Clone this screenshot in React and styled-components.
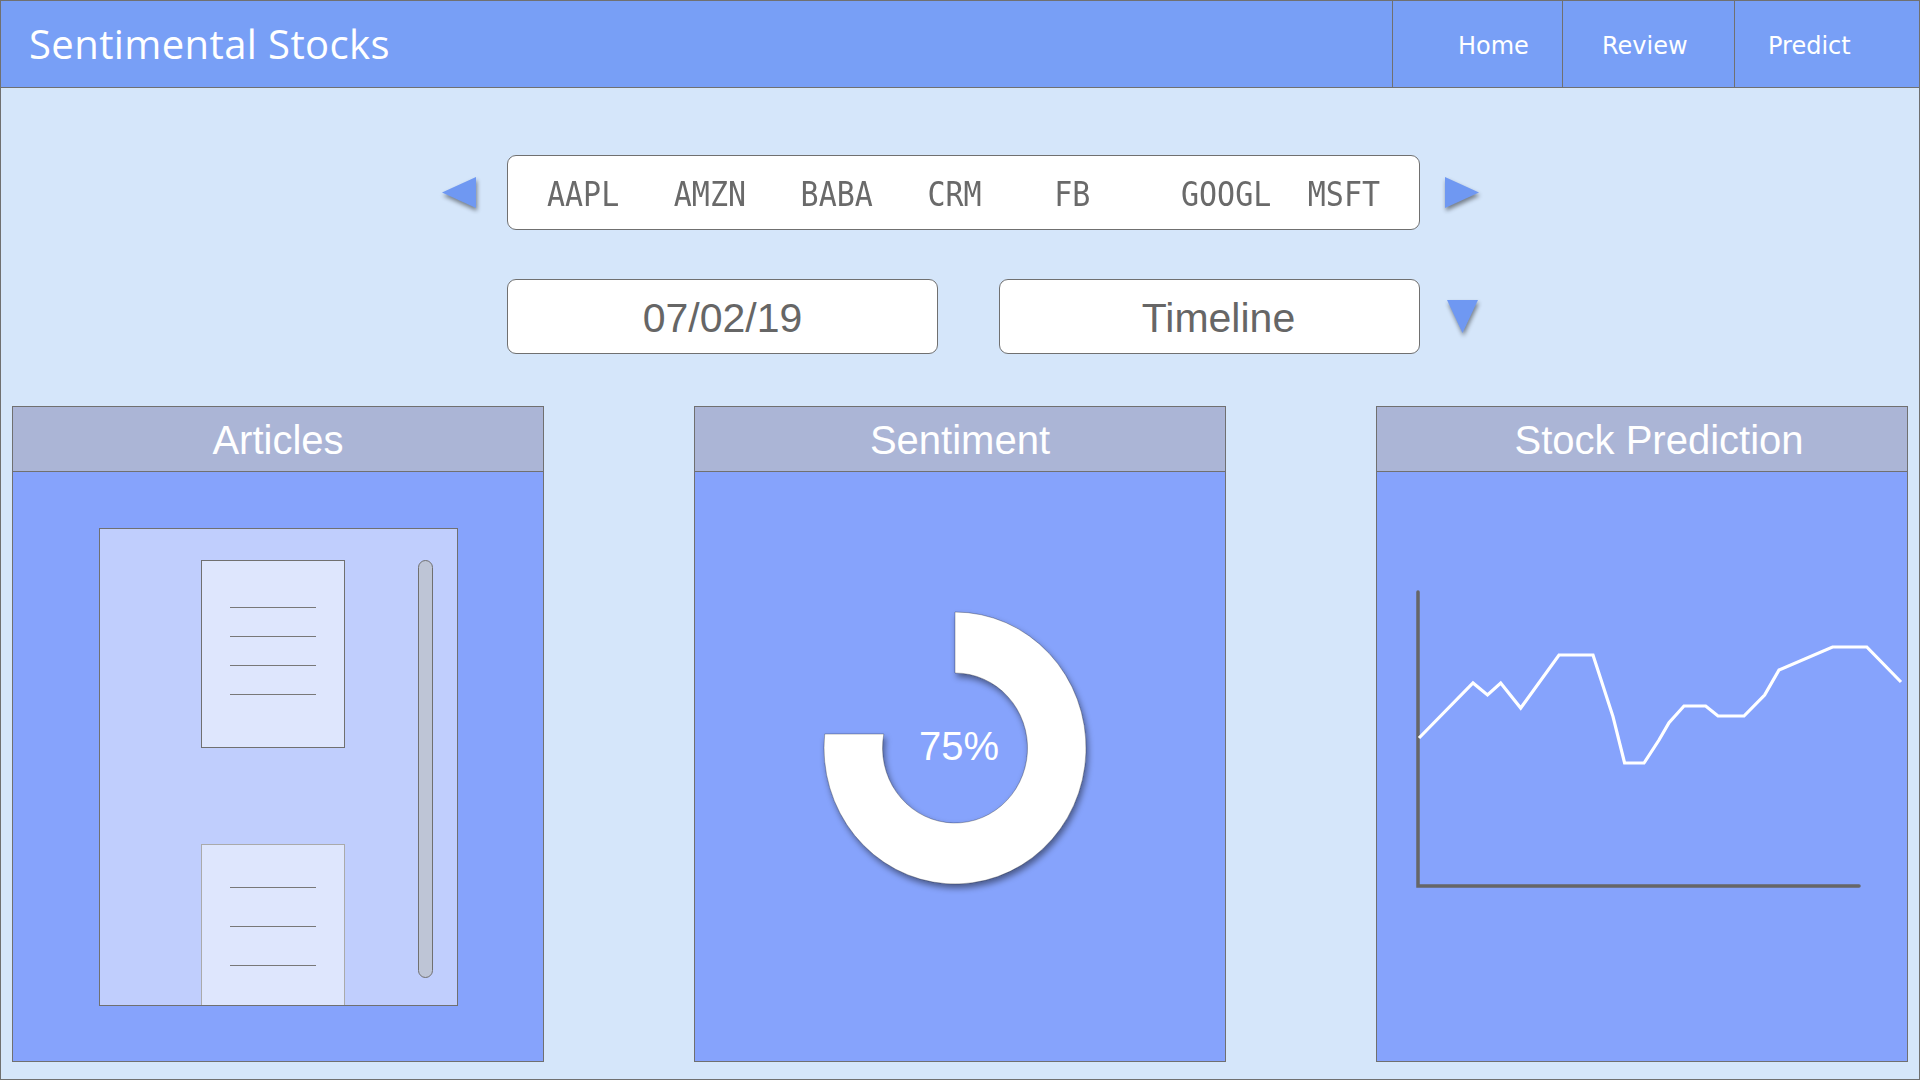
import React from "react"
import styled, { createGlobalStyle } from "styled-components"

const GlobalStyle = createGlobalStyle`
  html, body {
    margin: 0;
    padding: 0;
    background: #d5e6fa;
  }
  * { box-sizing: border-box; }
`

const Page = styled.div`
  width: 1920px;
  height: 1080px;
  border: 1px solid #707070;
  background: #d5e6fa;
  display: flex;
  flex-direction: column;
  overflow: hidden;
`
const Header = styled.header`
  height: 87px;
  flex-shrink: 0;
  display: flex;
  justify-content: space-between;
  background: #789ff6;
  border-bottom: 1px solid #707070;
`
const Title = styled.div`
  display: flex;
  align-items: center;
  padding-left: 28px;
  padding-bottom: 1px;
  font-family: "Open Sans", sans-serif;
  font-size: 40px;
  color: #ffffff;
  letter-spacing: 0.4px;
`
const Nav = styled.nav`
  display: flex;
`
const NavItem = styled.a`
  width: ${(p) => p.$w}px;
  border-left: 1px solid #707070;
  display: flex;
  align-items: center;
  padding-left: ${(p) => p.$pl}px;
  padding-top: 3px;
  font-family: "DejaVu Sans", sans-serif;
  font-size: 24px;
  color: #ffffff;
  cursor: pointer;
`
const Main = styled.main`
  flex: 1;
  display: flex;
  flex-direction: column;
  padding: 67px 11px 0;
`
const Controls = styled.div`
  display: grid;
  grid-template-columns: 65px 913px 59px;
  grid-template-rows: 75px 75px;
  row-gap: 49px;
  margin-left: 430px;
`
const ArrowBox = styled.div`
  grid-column: ${(p) => p.$col};
  align-self: center;
  margin-left: ${(p) => p.$ml || 0}px;
  display: flex;
  svg { filter: drop-shadow(1px 3px 2px rgba(0, 0, 0, 0.45)); overflow: visible; }
`
const TickerBar = styled.div`
  grid-column: 2;
  background: #ffffff;
  border: 1px solid #707070;
  border-radius: 9px;
  display: flex;
  align-items: center;
  padding: 3px 0 0 39px;
`
const Ticker = styled.span`
  width: 126.8px;
  flex-shrink: 0;
  font-family: "DejaVu Sans Mono", monospace;
  font-size: 30px;
  color: #6a6a6a;
  transform: scaleY(1.1);
`
const DateRow = styled.div`
  grid-column: 2;
  display: flex;
  gap: 61px;
`
const Field = styled.div`
  width: ${(p) => p.$w}px;
  height: 75px;
  background: #ffffff;
  border: 1px solid #707070;
  border-radius: 9px;
  display: flex;
  align-items: center;
  justify-content: center;
  padding: 4px 0 0 ${(p) => p.$pl || 0}px;
  font-family: "Liberation Sans", sans-serif;
  font-size: 41px;
  color: #666666;
`
const Panels = styled.div`
  margin-top: 52px;
  display: flex;
  justify-content: space-between;
`
const Panel = styled.section`
  width: 532px;
  height: 656px;
  border: 1px solid #707070;
  background: #86a3fc;
  display: flex;
  flex-direction: column;
`
const PanelHead = styled.div`
  height: 65px;
  flex-shrink: 0;
  background: #abb5d6;
  border-bottom: 1px solid #707070;
  display: flex;
  align-items: center;
  justify-content: center;
  padding: 2px 0 0 ${(p) => p.$pl || 0}px;
  font-family: "Liberation Sans", sans-serif;
  font-size: 40px;
  color: #ffffff;
`
const PanelBody = styled.div`
  flex: 1;
  display: flex;
  align-items: center;
  justify-content: center;
`
const ListBox = styled.div`
  width: 359px;
  height: 478px;
  background: #c0cefd;
  border: 1px solid #707070;
  display: flex;
  align-items: flex-start;
  padding: 31px 0 0 101px;
  overflow: hidden;
`
const CardColumn = styled.div`
  width: 144px;
  display: flex;
  flex-direction: column;
  gap: 96px;
`
const Card = styled.div`
  width: 144px;
  height: 188px;
  flex-shrink: 0;
  background: #dee6fd;
  border: 1px solid ${(p) => p.$border};
  display: flex;
  flex-direction: column;
  align-items: center;
  padding-top: ${(p) => p.$top}px;
  gap: ${(p) => p.$gap}px;
`
const Line = styled.div`
  width: 86px;
  height: 1px;
  flex-shrink: 0;
  background: #787878;
`
const Scroll = styled.div`
  width: 15px;
  height: 418px;
  margin-left: 73px;
  border-radius: 8px;
  background: #bec5d6;
  border: 1px solid #707070;
`
const Drawing = styled.svg`
  display: block;
`

const tickers = ["AAPL", "AMZN", "BABA", "CRM", "FB", "GOOGL", "MSFT"]

const chart = [
  [42, 266], [96, 211], [110.5, 223], [123.7, 211], [143.7, 236], [182, 183], [216, 183],
  [236, 244.6], [247.6, 291], [267, 291], [282, 268], [292, 250.6], [307, 234], [328.7, 234],
  [341, 244], [367, 244], [387.6, 223], [402, 198], [455.5, 175], [489.8, 175], [524, 210],
]

function Donut() {
  const cx = 260, cy = 276
  const d = `M ${cx} ${cy - 136} A 131 136 0 1 1 ${cx - 130.3} ${cy - 14} L ${cx - 71.2} ${cy - 14} A 72.5 75 0 1 0 ${cx} ${cy - 75} Z`
  return (
    <Drawing width="530" height="589" viewBox="0 0 530 589">
      <defs>
        <filter id="ds" x="-20%" y="-20%" width="140%" height="140%">
          <feDropShadow dx="2" dy="4" stdDeviation="3" floodColor="#000" floodOpacity="0.45" />
        </filter>
      </defs>
      <path d={d} fill="#ffffff" stroke="rgba(0,0,0,0.35)" strokeWidth="0.8" filter="url(#ds)" />
      <text x="264" y="288" textAnchor="middle" fill="#ffffff" fontFamily="Liberation Sans, sans-serif" fontSize="40">75%</text>
    </Drawing>
  )
}

function Chart() {
  return (
    <Drawing width="530" height="589" viewBox="0 0 530 589">
      <polyline points="41,120 41,414 482,414" fill="none" stroke="#666" strokeWidth="3.5" strokeLinecap="round" />
      <polyline points={chart.map((p) => p.join(",")).join(" ")} fill="none" stroke="#ffffff" strokeWidth="3.2" />
    </Drawing>
  )
}

export default function App() {
  return (
    <>
      <GlobalStyle />
      <Page>
        <Header>
          <Title>Sentimental Stocks</Title>
          <Nav>
            <NavItem $w={170} $pl={65}>Home</NavItem>
            <NavItem $w={172} $pl={39}>Review</NavItem>
            <NavItem $w={185} $pl={33}>Predict</NavItem>
          </Nav>
        </Header>
        <Main>
          <Controls>
            <ArrowBox $col={1}>
              <svg width="34" height="31" viewBox="0 0 34 31"><polygon points="0,15.5 34,0 34,31" fill="#6f98f2" /></svg>
            </ArrowBox>
            <TickerBar>
              {tickers.map((t) => <Ticker key={t}>{t}</Ticker>)}
            </TickerBar>
            <ArrowBox $col={3} $ml={25}>
              <svg width="34" height="31" viewBox="0 0 34 31"><polygon points="34,15.5 0,0 0,31" fill="#6f98f2" /></svg>
            </ArrowBox>
            <DateRow>
              <Field $w={431}>07/02/19</Field>
              <Field $w={421} $pl={18}>Timeline</Field>
            </DateRow>
            <ArrowBox $col={3} $ml={27}>
              <svg width="31" height="33" viewBox="0 0 31 33"><polygon points="0,0 31,0 15.5,33" fill="#6f98f2" /></svg>
            </ArrowBox>
          </Controls>
          <Panels>
            <Panel>
              <PanelHead>Articles</PanelHead>
              <PanelBody>
                <ListBox>
                  <CardColumn>
                    <Card $border="#707070" $top={46} $gap={28}>
                      <Line /><Line /><Line /><Line />
                    </Card>
                    <Card $border="#aaaaaa" $top={42} $gap={38}>
                      <Line /><Line /><Line />
                    </Card>
                  </CardColumn>
                  <Scroll />
                </ListBox>
              </PanelBody>
            </Panel>
            <Panel>
              <PanelHead>Sentiment</PanelHead>
              <PanelBody>
                <Donut />
              </PanelBody>
            </Panel>
            <Panel>
              <PanelHead $pl={34}>Stock Prediction</PanelHead>
              <PanelBody>
                <Chart />
              </PanelBody>
            </Panel>
          </Panels>
        </Main>
      </Page>
    </>
  )
}
